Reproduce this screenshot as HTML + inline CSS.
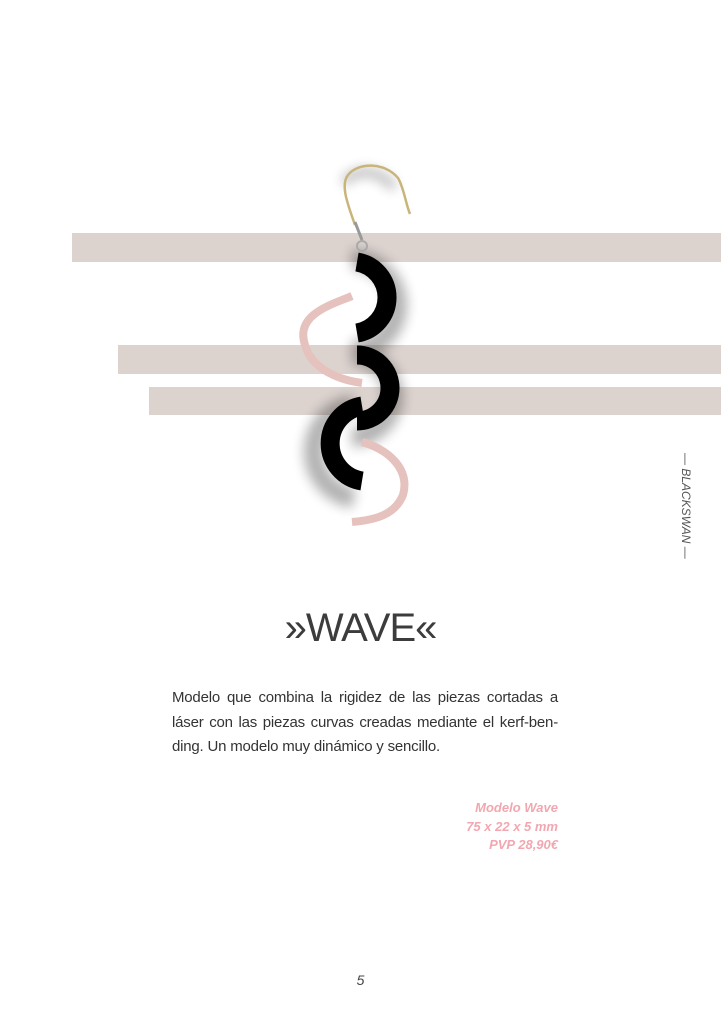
<!DOCTYPE html>
<html><head><meta charset="utf-8"><style>
body{margin:0;width:721px;height:1024px;background:#fff;position:relative;overflow:hidden;font-family:"Liberation Sans",sans-serif}
.bar{position:absolute;background:#dcd3cf;right:0}
.t{position:absolute}
.p div{text-align:justify;text-align-last:justify;white-space:nowrap;letter-spacing:-0.2px}
</style></head><body>
<div class="bar" style="left:72px;top:233px;height:29px"></div>
<div class="bar" style="left:118px;top:345px;height:29px"></div>
<div class="bar" style="left:149px;top:387px;height:28px"></div>
<svg class="t" style="left:0;top:0" width="721" height="1024">
<defs><filter id="b" x="-50%" y="-50%" width="200%" height="200%"><feGaussianBlur stdDeviation="6"/></filter></defs>
<g filter="url(#b)" opacity="0.3" transform="translate(-6,8)">
<path d="M358 252 A45 45 0 0 1 358 342" stroke="#000" stroke-width="20" fill="none"/>
<path d="M358 347 A41 41 0 0 1 358 429" stroke="#000" stroke-width="20" fill="none"/>
<path d="M360 397 A47 47 0 0 0 360 490" stroke="#000" stroke-width="20" fill="none"/>
<path d="M350 175 C360 160,385 160,400 180" stroke="#000" stroke-width="8" fill="none"/>
</g>
<path d="M355 225 C348 205,340 185,348 175 C358 162,385 162,398 178 C404 188,406 205,410 214" stroke="#c9b47a" stroke-width="2.5" fill="none"/>
<path d="M355 222 L362 240" stroke="#999" stroke-width="3"/>
<circle cx="362" cy="246" r="5" stroke="#aaa" stroke-width="2" fill="none"/>
<path d="M357 262 A36 36 0 0 1 357 333" stroke="#000" stroke-width="19" fill="none"/>
<path d="M357 355 A33 33 0 0 1 357 421" stroke="#000" stroke-width="19" fill="none"/>
<path d="M362 406 A38 38 0 0 0 362 481" stroke="#000" stroke-width="19" fill="none"/>
<path d="M352 296 C330 305,295 315,305 345 C312 370,340 380,362 383" stroke="#e5c2bd" stroke-width="8" fill="none"/>
<path d="M362 442 C390 450,410 470,403 495 C395 515,375 520,352 522" stroke="#e5c2bd" stroke-width="8" fill="none"/>
</svg>
<div class="t" style="left:0;width:721px;top:606px;text-align:center;font-size:40px;color:#3c3c3c;letter-spacing:-1px">»WAVE«</div>
<div class="t p" style="left:172px;top:686px;width:386px;font-size:15px;line-height:24.5px;color:#333">
<div>Modelo que combina la rigidez de las piezas cortadas a</div>
<div>láser con las piezas curvas creadas mediante el kerf-ben-</div>
<div style="text-align-last:left">ding. Un modelo muy dinámico y sencillo.</div>
</div>
<div class="t" style="right:163px;top:799px;text-align:right;font-size:13px;line-height:18.5px;color:#f2a7b0;font-weight:bold;font-style:italic">Modelo Wave<br>75 x 22 x 5 mm<br>PVP 28,90€</div>
<div class="t" style="left:0;width:721px;top:972px;text-align:center;font-size:14px;font-style:italic;color:#444">5</div>
<div class="t" style="left:634px;top:498px;width:104px;text-align:center;font-size:12px;font-style:italic;color:#555;transform:rotate(90deg);white-space:nowrap">— BLACKSWAN —</div>
</body></html>
